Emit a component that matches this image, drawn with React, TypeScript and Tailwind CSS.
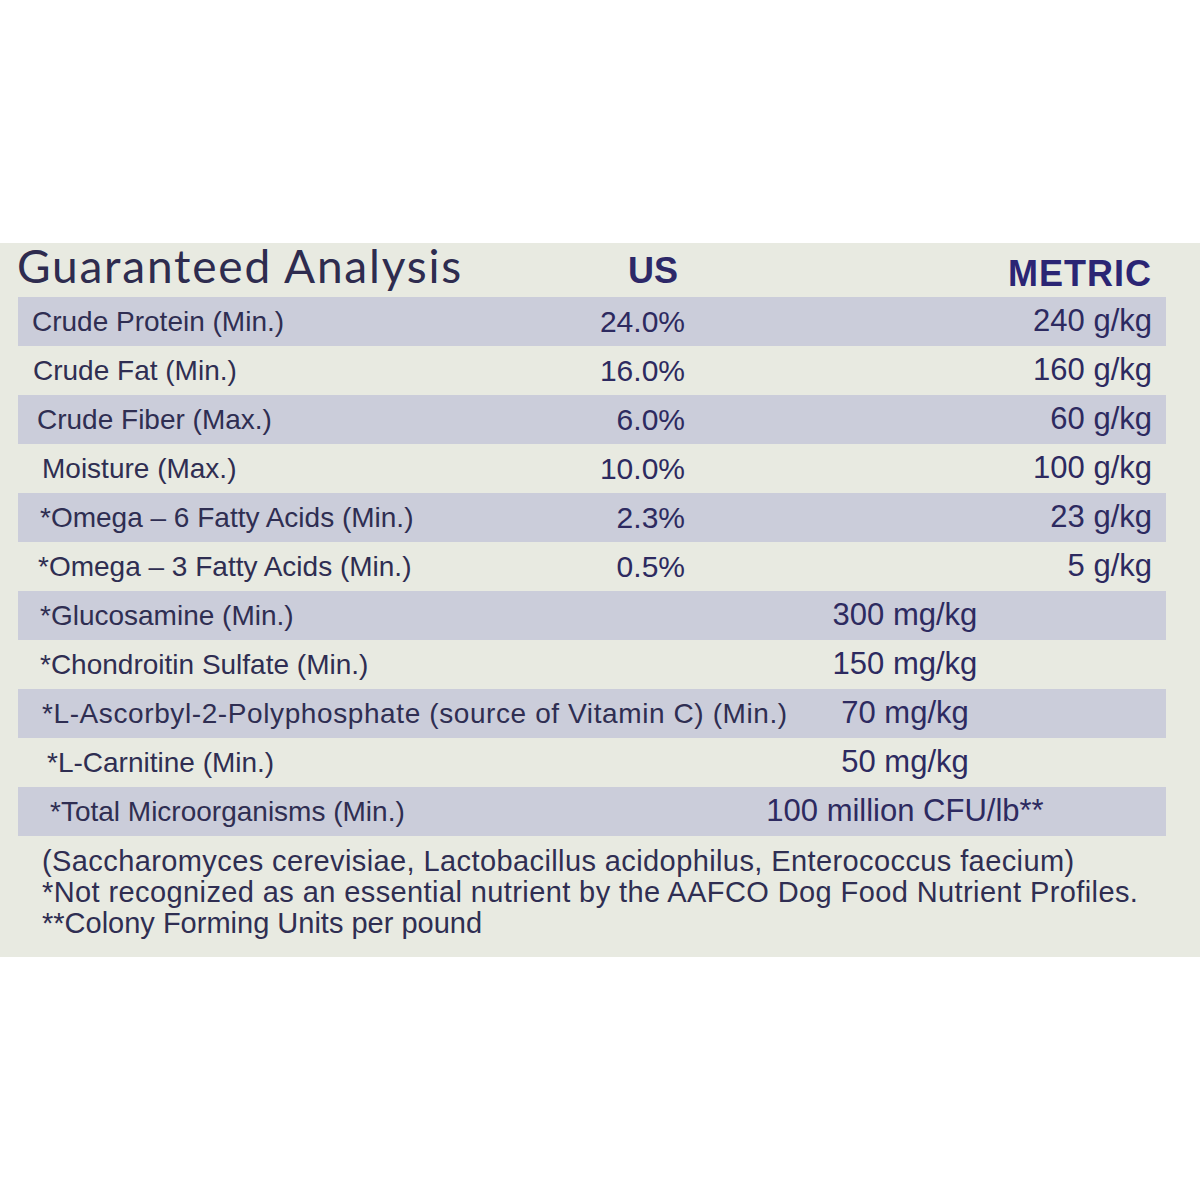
import React from "react";

type Row = {
  label: string;
  pl: string;
  striped: boolean;
  us?: string;
  metric?: string;
  merged?: string;
  wide?: boolean;
};

const rows: Row[] = [
  { label: "Crude Protein (Min.)", pl: "pl-[14px]", striped: true, us: "24.0%", metric: "240 g/kg" },
  { label: "Crude Fat (Min.)", pl: "pl-[15px]", striped: false, us: "16.0%", metric: "160 g/kg" },
  { label: "Crude Fiber (Max.)", pl: "pl-[19px]", striped: true, us: "6.0%", metric: "60 g/kg" },
  { label: "Moisture (Max.)", pl: "pl-[24px]", striped: false, us: "10.0%", metric: "100 g/kg" },
  { label: "*Omega – 6 Fatty Acids (Min.)", pl: "pl-[22px]", striped: true, us: "2.3%", metric: "23 g/kg" },
  { label: "*Omega – 3 Fatty Acids (Min.)", pl: "pl-[20px]", striped: false, us: "0.5%", metric: "5 g/kg" },
  { label: "*Glucosamine (Min.)", pl: "pl-[22px]", striped: true, merged: "300 mg/kg" },
  { label: "*Chondroitin Sulfate (Min.)", pl: "pl-[22px]", striped: false, merged: "150 mg/kg" },
  { label: "*L-Ascorbyl-2-Polyphosphate (source of Vitamin C) (Min.)", pl: "pl-[24px]", striped: true, merged: "70 mg/kg", wide: true },
  { label: "*L-Carnitine (Min.)", pl: "pl-[29px]", striped: false, merged: "50 mg/kg" },
  { label: "*Total Microorganisms (Min.)", pl: "pl-[32px]", striped: true, merged: "100 million CFU/lb**" },
];

const sans = "font-['Liberation_Sans',Arial,sans-serif]";

export default function App() {
  return (
    <div className="w-[1200px] h-[1200px] bg-white flex flex-col">
      <div className="h-[243px] shrink-0" />
      <div className="h-[714px] shrink-0 bg-[#e8eae1] flex flex-col">
        {/* Header */}
        <div className="h-[54px] shrink-0 ml-[18px] w-[1148px] grid grid-cols-[560px_107px_467px] items-end">
          <div className="font-['Lato',sans-serif] text-[46px] leading-none text-[#2e2c4f] pb-[9px] -ml-[1px] tracking-[1.8px] whitespace-nowrap">
            Guaranteed Analysis
          </div>
          <div className={`${sans} font-bold text-[36px] leading-none text-[#2d2868] text-right pb-[9px] mr-[7px]`}>US</div>
          <div className={`${sans} font-bold text-[36px] leading-none text-[#2b2574] text-right pb-[6px] tracking-[1px]`}>METRIC</div>
        </div>
        {/* Rows */}
        <div className="ml-[18px] w-[1148px] flex flex-col">
          {rows.map((r, i) =>
            r.merged ? (
              <div
                key={i}
                className={`h-[49px] flex items-center ${r.striped ? "bg-[#cbcdda]" : ""}`}
              >
                <div
                  className={`w-[640px] shrink-0 whitespace-nowrap ${sans} text-[28px] text-[#2f2e52] ${r.pl} ${
                    r.wide ? "tracking-[0.6px]" : ""
                  }`}
                >
                  {r.label}
                </div>
                <div className={`w-[494px] text-center ${sans} text-[31px] text-[#2d2a60] whitespace-nowrap`}>
                  {r.merged}
                </div>
              </div>
            ) : (
              <div
                key={i}
                className={`h-[49px] grid grid-cols-[560px_107px_467px] items-center ${r.striped ? "bg-[#cbcdda]" : ""}`}
              >
                <div className={`whitespace-nowrap ${sans} text-[28px] text-[#2f2e52] ${r.pl}`}>
                  {r.label}
                </div>
                <div className={`text-right ${sans} text-[30px] text-[#2d2a60] whitespace-nowrap`}>{r.us}</div>
                <div className={`text-right ${sans} text-[31px] text-[#2d2a60] whitespace-nowrap`}>{r.metric}</div>
              </div>
            )
          )}
        </div>
        {/* Footnotes */}
        <div className={`pl-[42px] pt-[10px] ${sans} text-[29px] leading-[31px] text-[#2f2e52] tracking-[0.4px]`}>
          <div>(Saccharomyces cerevisiae, Lactobacillus acidophilus, Enterococcus faecium)</div>
          <div>*Not recognized as an essential nutrient by the AAFCO Dog Food Nutrient Profiles.</div>
          <div className="tracking-[0px]">**Colony Forming Units per pound</div>
        </div>
      </div>
    </div>
  );
}
